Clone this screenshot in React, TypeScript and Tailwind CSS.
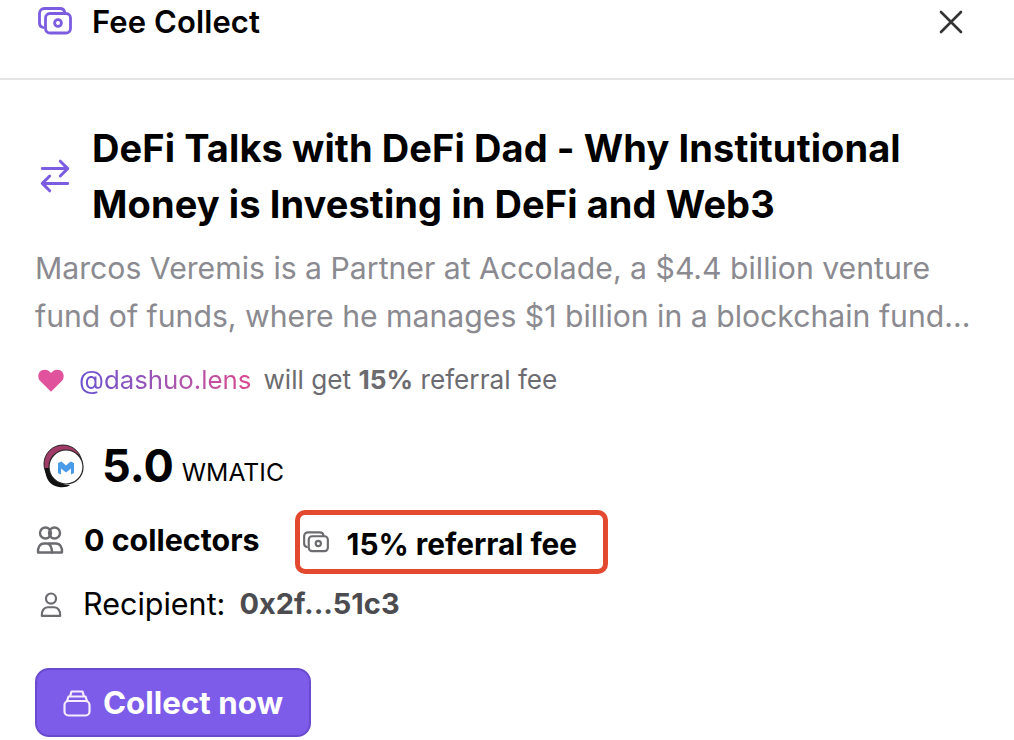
import React from "react";

const Cash = ({ className }: { className: string }) => (
  <svg viewBox="0 0 34 28" fill="none" stroke="currentColor" strokeWidth="2.800" strokeLinecap="round" strokeLinejoin="round" className={className}>
    <path d="M5 20.500C2.800 20 1.500 18.400 1.500 16V6.500C1.500 3.500 3.500 1.500 6.500 1.500H22C24.600 1.500 26.400 3 26.800 5.500" />
    <rect x="7.500" y="6.500" width="25" height="19.500" rx="4.500" />
    <circle cx="20" cy="16" r="3.400" />
  </svg>
);

const Users = () => (
  <svg viewBox="0 0 28 28" fill="none" stroke="#6b6b70" strokeWidth="2.400" strokeLinecap="round" strokeLinejoin="round" className="w-[28px] h-[28px] ml-[1px]">
    <circle cx="9.500" cy="7" r="5.500" />
    <circle cx="18.500" cy="7" r="5.500" />
    <path d="M2 26.500c-.5-5 2-9 6-9h3c3 0 5 4 5 9H2Z" />
    <path d="M13 17.500h7c4 0 6.500 4 6 9H16" />
  </svg>
);

const User = () => (
  <svg viewBox="0 0 24 28" fill="none" stroke="#6b6b70" strokeWidth="2.400" strokeLinecap="round" strokeLinejoin="round" className="w-[22px] h-[27px]">
    <circle cx="12" cy="7.500" r="5.500" />
    <path d="M2 26.500c-.5-6 2.500-9.500 6.500-9.500h7c4 0 7 3.500 6.500 9.500H2Z" />
  </svg>
);

export default function App() {
  return (
    <div className="w-[1014px] h-[740px] overflow-hidden bg-white font-['Inter','Liberation_Sans',sans-serif] text-black">
      <header className="h-[80px] border-b-2 border-[#e5e5e5] pl-[38px] pr-[51px] flex items-start justify-between">
        <div className="flex items-center gap-[20px] h-[44px]">
          <Cash className="w-[34px] h-[28px] text-[#7c5ce0] mt-[-2px]" />
          <span className="text-[31px] leading-[44px] font-semibold tracking-[0.1px]">Fee Collect</span>
        </div>
        <svg viewBox="0 0 24 24" fill="none" stroke="#333" strokeWidth="2.600" strokeLinecap="round" className="w-[24px] h-[24px] mt-[10px]">
          <path d="M2 2l20 20M22 2L2 22" />
        </svg>
      </header>

      <main className="pl-[35px] pr-[40px] pt-[40px]">
        <div className="flex items-center">
          <svg viewBox="0 0 32 34" fill="none" stroke="#7c5ce0" strokeWidth="2.800" strokeLinecap="round" strokeLinejoin="round" className="w-[36px] h-[36px] shrink-0 ml-[2px] mr-[19px] mt-[-1px]">
            <path d="M4 10h24M21 3l7 7-7 7M28 24H4M11 17l-7 7 7 7" />
          </svg>
          <h1 className="text-[38px] leading-[56px] font-bold tracking-[0.1px] whitespace-nowrap">
            DeFi Talks with DeFi Dad - Why Institutional
            <br />
            Money is Investing in DeFi and Web3
          </h1>
        </div>

        <p className="mt-[12px] text-[30.200px] leading-[48px] text-[#8a8a90] whitespace-nowrap">
          Marcos Veremis is a Partner at Accolade, a $4.4 billion venture
          <br />
          fund of funds, where he manages $1 billion in a blockchain fund...
        </p>

        <div className="mt-[23px] flex items-center text-[25.800px] leading-[34px] text-[#6b6b70]">
          <svg viewBox="0 0 24 22" fill="#e0529c" className="w-[28px] h-[25px] ml-[2px] mr-[14px]">
            <path d="M12 21 2.500 11.500C-.5 8.500.5 1.500 6.500 1.500c2.500 0 4.500 1.500 5.500 3 1-1.500 3-3 5.500-3 6 0 7 7 4 10L12 21Z" />
          </svg>
          <span className="bg-gradient-to-r from-[#6a4fd0] to-[#d9488f] bg-clip-text text-transparent">@dashuo.lens</span>
          <span className="ml-[12px] text-[26.200px]">will get <b className="font-bold">15%</b> referral fee</span>
        </div>

        <div className="mt-[41px] flex items-center">
          <svg viewBox="0 0 44 44" className="w-[44px] h-[44px] ml-[7px] mr-[16px]">
            <circle cx="21" cy="20" r="19" fill="#a03a66" stroke="#222" strokeWidth="1" />
            <path d="M3 24C3 34 8 42 17 43c4 .5 9 0 11-2C17 41 8 34 7 24Z" fill="#111" />
            <circle cx="24" cy="23" r="17" fill="#fff" stroke="#222" strokeWidth="1.200" />
            <path d="M16 29v-10l3.500-1.500 4.500 4 4.500-4L32 19v10l-3 1.500v-6l-5 4-5-4v6Z" fill="#4a9be8" />
          </svg>
          <span className="text-[45px] leading-[56px] font-bold">5.0</span>
          <span className="ml-[8px] mt-[11px] text-[24.700px] leading-[34px]">WMATIC</span>
        </div>

        <div className="mt-[16px] flex items-start">
          <div className="mt-[10px] flex items-center">
            <Users />
            <span className="ml-[20px] text-[30.400px] leading-[40px] font-bold whitespace-nowrap">0 collectors</span>
          </div>
          <div className="ml-[35px] w-[313px] h-[64px] border-[5px] border-[#e2492f] rounded-[10px] flex items-center pl-[3px]">
            <Cash className="w-[26px] h-[22px] text-[#6b6b70]" />
            <span className="ml-[18px] mt-[3px] text-[29.800px] leading-[40px] font-bold whitespace-nowrap">15% referral fee</span>
          </div>
        </div>

        <div className="mt-[10px] flex items-center">
          <span className="ml-[5px] flex"><User /></span>
          <span className="ml-[21px] text-[30.500px] leading-[40px]">Recipient:</span>
          <span className="ml-[14px] text-[29px] leading-[40px] font-bold text-[#4b4b50]">0x2f...51c3</span>
        </div>

        <button className="mt-[44px] w-[276px] h-[69px] rounded-[14px] bg-[#7c5ce8] border-2 border-[#6a4bd0] text-white flex items-center justify-center gap-[12px]">
          <svg viewBox="0 0 28 28" fill="none" stroke="#f5ecff" strokeWidth="2.200" strokeLinecap="round" strokeLinejoin="round" className="w-[28px] h-[28px]">
            <rect x="1.500" y="12" width="25" height="14.500" rx="4" />
            <path d="M4 12l1.500-4.500h17L24 12M7 7.500 8.500 2.500h11L21 7.500" />
          </svg>
          <span className="text-[31.300px] leading-[40px] font-bold">Collect now</span>
        </button>
      </main>
    </div>
  );
}
